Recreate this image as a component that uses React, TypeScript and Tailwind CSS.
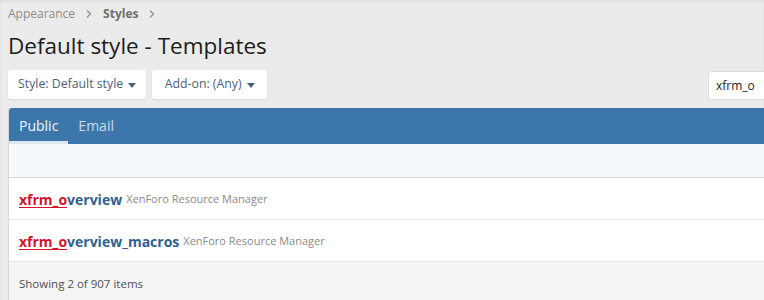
import { ChevronRight } from 'lucide-react';

const rows = [
  { rest: 'verview', addon: 'XenForo Resource Manager' },
  { rest: 'verview_macros', addon: 'XenForo Resource Manager' },
];

function Caret() {
  return (
    <svg width="8" height="5" viewBox="0 0 8 5" className="ml-[5px] mt-[1px]">
      <path d="M0 0h8L4 5z" fill="currentColor" />
    </svg>
  );
}

export default function App() {
  return (
    <div className="h-[300px] overflow-hidden bg-[#ebebeb] text-[#141414] shadow-[inset_0_2px_3px_rgba(0,0,0,0.06)]" style={{ fontFamily: '"Open Sans", "Segoe UI", sans-serif' }}>
      <div className="pl-2">
        <div className="flex items-center h-[26px] pt-[1px] text-[12px] text-[#8c8c8c]">
          <span>Appearance</span>
          <ChevronRight className="w-3 h-3 mx-[8px] text-[#8c8c8c]" strokeWidth={2.5} />
          <span className="font-bold text-[#6e6e6e]">Styles</span>
          <ChevronRight className="w-3 h-3 mx-[8px] text-[#8c8c8c]" strokeWidth={2.5} />
        </div>
        <h1 className="text-[22.5px] leading-[38px] h-[42px] pt-[1px] text-[#1d1d1d]">Default style - Templates</h1>
        <div className="flex items-start h-[38px] mt-[2px]">
          <button className="flex items-center h-[29px] px-[10px] bg-white rounded-[3px] text-[12.3px] text-[#4e6277] shadow-[0_1px_2px_rgba(0,0,0,0.08)]">
            Style: Default style<Caret />
          </button>
          <button className="flex items-center justify-center w-[115px] h-[29px] ml-[6px] bg-white rounded-[3px] text-[12.3px] text-[#4e6277] shadow-[0_1px_2px_rgba(0,0,0,0.08)]">
            Add-on: (Any)<Caret />
          </button>
          <div className="ml-auto mt-[1px] flex items-center w-[56px] h-[29px] pl-[7px] bg-white border border-r-0 border-[#dcdcdc] rounded-l-[4px] text-[12px] text-[#1d1d1d]">
            xfrm_o
          </div>
        </div>
        <div className="w-[770px] border border-[#d8d8d8] border-t-0 rounded-t-[3px] bg-white">
          <div className="flex h-[36px] bg-[#3c76ab] rounded-t-[3px] text-[14px]">
            <div className="flex items-center px-[10px] border-b-[3px] border-[#dbe6f1] pt-[2px] text-[#f3f7fb]">Public</div>
            <div className="flex items-center px-[10px] border-b-[3px] border-transparent pt-[2px] text-[#c9dcee]">Email</div>
          </div>
          <div className="h-[34px] bg-[#f5f9fd] border-b border-[#d8d8d8]" />
          {rows.map((r) => (
            <div key={r.rest} className="flex items-center h-[42px] pl-[10px] border-b border-[#e6e6e6] pt-[1px]">
              <span className="text-[14px] font-bold">
                <span className="text-[#d4132d] underline underline-offset-2">xfrm_o</span>
                <span className="text-[#31618f]">{r.rest}</span>
              </span>
              <span className="ml-[4px] text-[11px] text-[#8a8a8a]">{r.addon}</span>
            </div>
          ))}
          <div className="flex items-center h-[40px] pl-[10px] pt-[3px] bg-[#f5f5f5] text-[11.5px] text-[#505050]">
            Showing 2 of 907 items
          </div>
        </div>
      </div>
    </div>
  );
}
